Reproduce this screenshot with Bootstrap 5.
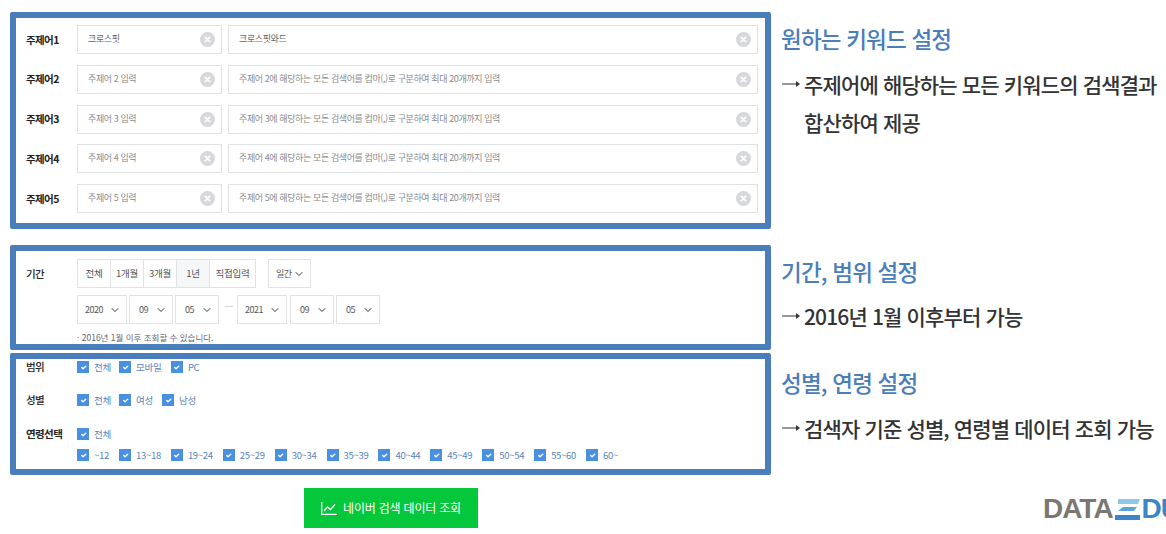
<!DOCTYPE html>
<html lang="ko">
<head>
<meta charset="UTF-8">
<title>네이버 검색 데이터 조회</title>
<link href="https://cdn.jsdelivr.net/npm/bootstrap@5.3.3/dist/css/bootstrap.min.css" rel="stylesheet">
<style>
html, body { height: 534px; overflow: hidden; background: #fff; }
body { font-family: "Noto Sans CJK KR", "Noto Sans", sans-serif; color: #333; }
.page-wrap { width: 1166px; height: 534px; overflow: hidden; padding: 12px 0 0 10px; }
.left-col { width: 761px; flex: none; }
.blue-box { border: 6px solid #4a7ebb; border-radius: 2px; background: #fff; overflow: hidden; padding-left: 10px; }
.box-keyword { height: 217px; padding-top: 7px; padding-right: 7px; }
.box-period { height: 105px; margin-top: 16px; padding-top: 8px; }
.box-range { height: 122px; margin-top: 3px; }
.kw-row { height: 29px; margin-bottom: 10.8px; }
.row-label { width: 51px; flex: none; font-size: 10.5px; font-weight: 700; color: #222; letter-spacing: -.6px; }
.label-plain { font-weight: 500; }
.field { position: relative; }
.field-short { width: 145px; flex: none; margin-right: 6px; }
.field .form-control { height: 29px; border: 1px solid #dfe1e5; border-radius: 0; font-size: 9px; letter-spacing: -.4px; padding: 0 28px 2px 10px; color: #666; box-shadow: none; }
.field .form-control::placeholder { color: #8a8a8a; }
.clear-btn { position: absolute; right: 7px; top: 7px; width: 15px; height: 15px; }
.seg-btn { height: 29px; border: 1px solid #e0e2e6; margin-left: -1px; background: #fff; font-size: 9.5px; letter-spacing: -.3px; color: #555; display: flex; align-items: center; justify-content: center; padding: 0; border-radius: 0 !important; }
.seg-btn:first-child { margin-left: 0; }
.seg-on { background: #f6f7f9; }
.w-33 { width: 34px; }
.w-46 { width: 47px; }
.date-row { margin-top: 7px; }
.date-row .form-select, .unit-select { height: 29px; border: 1px solid #e0e2e6; border-radius: 0; font-size: 9px; letter-spacing: -.5px; color: #555; padding: 0 0 0 7px; background-size: 8px; background-position: right 7px center; box-shadow: none; }
.sel-y { width: 50px; margin-right: 2px; }
.date-row .sel-d { width: 44px; margin-right: 2px; padding-left: 9px; }
.sel-gap { margin-right: 3px; }
.unit-select { width: 43px; margin-left: 12px; }
.date-dash { width: 16px; text-align: center; color: #ccc; font-size: 10px; line-height: 20px; }
.date-note { font-size: 8.5px; color: #666; margin: 5px 0 0 0; line-height: 16px; white-space: nowrap; }
.check-row { height: 16px; }
.check-item { display: flex; align-items: center; margin: 0; padding: 0; min-height: 0; font-size: 9.5px; letter-spacing: -.3px; color: #5b84b8; }
.check-item .form-check-input { width: 12px; height: 12px; margin: 0 5px 0 0; float: none; border: 0; border-radius: 0; background-color: #4a90e2; background-size: 9px; }
.range-2 { margin-top: 17px; }
.range-3 { margin-top: 18px; }
.range-4 { margin-top: 5px; }
.age-item { width: 51.9px; flex: none; }
.first-item { width: 42px; flex: none; }
.second-gender { width: 43px; flex: none; }
.search-btn { width: 174px; height: 40px; margin: 13px 0 0 294px; background: #05c73c; border: 0; border-radius: 0; color: #fff; font-size: 12px; letter-spacing: -.2px; display: flex; align-items: center; justify-content: center; gap: 6px; }
.right-col { width: 395px; flex: none; padding-left: 10px; }
.side-title { color: #4a7ebb; font-size: 22.5px; font-weight: 500; letter-spacing: -.8px; line-height: 30px; margin: 0; }
.side-text { color: #333; font-size: 21px; font-weight: 500; letter-spacing: -.85px; line-height: 38px; padding-left: 23px; position: relative; margin: 0; white-space: nowrap; }
.side-arrow { position: absolute; left: 1px; top: 15px; width: 18px; height: 8px; }
.title-1 { margin-top: 11px; }
.text-1 { margin-top: 12px; }
.title-2 { margin-top: 115px; }
.text-2 { margin-top: 11px; }
.title-3 { margin-top: 32px; }
.text-3 { margin-top: 12px; }
.logo-box { position: absolute; left: 1043px; top: 493px; display: flex; align-items: center; gap: 2px; font-family: "Liberation Sans", sans-serif; font-size: 28px; font-weight: 700; line-height: 32px; letter-spacing: -1px; white-space: nowrap; }
.logo-data { color: #7b7773; }
.logo-du { color: #3a86c8; }
</style>
</head>
<body>
<div class="page-wrap d-flex">
  <div class="left-col">
    <div class="blue-box box-keyword">
      <div class="kw-row d-flex align-items-center">
        <div class="row-label">주제어1</div>
        <div class="field field-short"><input class="form-control" value="크로스핏"><svg class="clear-btn" viewBox="0 0 15 15"><circle cx="7.5" cy="7.5" r="7.5" fill="#d6d8db"/><path d="M4.8 4.8l5.4 5.4M10.2 4.8l-5.4 5.4" stroke="#fff" stroke-width="1.6"/></svg></div>
        <div class="field flex-grow-1"><input class="form-control" value="크로스핏와드"><svg class="clear-btn" viewBox="0 0 15 15"><circle cx="7.5" cy="7.5" r="7.5" fill="#d6d8db"/><path d="M4.8 4.8l5.4 5.4M10.2 4.8l-5.4 5.4" stroke="#fff" stroke-width="1.6"/></svg></div>
      </div>
      <div class="kw-row d-flex align-items-center">
        <div class="row-label">주제어2</div>
        <div class="field field-short"><input class="form-control" placeholder="주제어 2 입력"><svg class="clear-btn" viewBox="0 0 15 15"><circle cx="7.5" cy="7.5" r="7.5" fill="#d6d8db"/><path d="M4.8 4.8l5.4 5.4M10.2 4.8l-5.4 5.4" stroke="#fff" stroke-width="1.6"/></svg></div>
        <div class="field flex-grow-1"><input class="form-control" placeholder="주제어 2에 해당하는 모든 검색어를 컴마(,)로 구분하여 최대 20개까지 입력"><svg class="clear-btn" viewBox="0 0 15 15"><circle cx="7.5" cy="7.5" r="7.5" fill="#d6d8db"/><path d="M4.8 4.8l5.4 5.4M10.2 4.8l-5.4 5.4" stroke="#fff" stroke-width="1.6"/></svg></div>
      </div>
      <div class="kw-row d-flex align-items-center">
        <div class="row-label">주제어3</div>
        <div class="field field-short"><input class="form-control" placeholder="주제어 3 입력"><svg class="clear-btn" viewBox="0 0 15 15"><circle cx="7.5" cy="7.5" r="7.5" fill="#d6d8db"/><path d="M4.8 4.8l5.4 5.4M10.2 4.8l-5.4 5.4" stroke="#fff" stroke-width="1.6"/></svg></div>
        <div class="field flex-grow-1"><input class="form-control" placeholder="주제어 3에 해당하는 모든 검색어를 컴마(,)로 구분하여 최대 20개까지 입력"><svg class="clear-btn" viewBox="0 0 15 15"><circle cx="7.5" cy="7.5" r="7.5" fill="#d6d8db"/><path d="M4.8 4.8l5.4 5.4M10.2 4.8l-5.4 5.4" stroke="#fff" stroke-width="1.6"/></svg></div>
      </div>
      <div class="kw-row d-flex align-items-center">
        <div class="row-label">주제어4</div>
        <div class="field field-short"><input class="form-control" placeholder="주제어 4 입력"><svg class="clear-btn" viewBox="0 0 15 15"><circle cx="7.5" cy="7.5" r="7.5" fill="#d6d8db"/><path d="M4.8 4.8l5.4 5.4M10.2 4.8l-5.4 5.4" stroke="#fff" stroke-width="1.6"/></svg></div>
        <div class="field flex-grow-1"><input class="form-control" placeholder="주제어 4에 해당하는 모든 검색어를 컴마(,)로 구분하여 최대 20개까지 입력"><svg class="clear-btn" viewBox="0 0 15 15"><circle cx="7.5" cy="7.5" r="7.5" fill="#d6d8db"/><path d="M4.8 4.8l5.4 5.4M10.2 4.8l-5.4 5.4" stroke="#fff" stroke-width="1.6"/></svg></div>
      </div>
      <div class="kw-row d-flex align-items-center">
        <div class="row-label">주제어5</div>
        <div class="field field-short"><input class="form-control" placeholder="주제어 5 입력"><svg class="clear-btn" viewBox="0 0 15 15"><circle cx="7.5" cy="7.5" r="7.5" fill="#d6d8db"/><path d="M4.8 4.8l5.4 5.4M10.2 4.8l-5.4 5.4" stroke="#fff" stroke-width="1.6"/></svg></div>
        <div class="field flex-grow-1"><input class="form-control" placeholder="주제어 5에 해당하는 모든 검색어를 컴마(,)로 구분하여 최대 20개까지 입력"><svg class="clear-btn" viewBox="0 0 15 15"><circle cx="7.5" cy="7.5" r="7.5" fill="#d6d8db"/><path d="M4.8 4.8l5.4 5.4M10.2 4.8l-5.4 5.4" stroke="#fff" stroke-width="1.6"/></svg></div>
      </div>
    </div>

    <div class="blue-box box-period">
      <div class="d-flex align-items-center">
        <div class="row-label label-plain">기간</div>
        <div class="d-flex">
          <button type="button" class="seg-btn w-33">전체</button>
          <button type="button" class="seg-btn w-33">1개월</button>
          <button type="button" class="seg-btn w-33">3개월</button>
          <button type="button" class="seg-btn w-33 seg-on">1년</button>
          <button type="button" class="seg-btn w-46">직접입력</button>
        </div>
        <select class="form-select unit-select"><option>일간</option></select>
      </div>
      <div class="d-flex date-row">
        <div class="row-label"></div>
        <select class="form-select sel-y"><option>2020</option></select>
        <select class="form-select sel-d"><option>09</option></select>
        <select class="form-select sel-d"><option>05</option></select>
        <div class="date-dash">—</div>
        <select class="form-select sel-y sel-gap"><option>2021</option></select>
        <select class="form-select sel-d"><option>09</option></select>
        <select class="form-select sel-d"><option>05</option></select>
      </div>
      <div class="d-flex">
        <div class="row-label"></div>
        <p class="date-note">· 2016년 1월 이후 조회할 수 있습니다.</p>
      </div>
    </div>

    <div class="blue-box box-range">
      <div class="d-flex align-items-center check-row">
        <div class="row-label label-plain">범위</div>
        <label class="check-item first-item"><input class="form-check-input" type="checkbox" checked>전체</label>
        <label class="check-item age-item"><input class="form-check-input" type="checkbox" checked>모바일</label>
        <label class="check-item age-item"><input class="form-check-input" type="checkbox" checked>PC</label>
      </div>
      <div class="d-flex align-items-center check-row range-2">
        <div class="row-label label-plain">성별</div>
        <label class="check-item first-item"><input class="form-check-input" type="checkbox" checked>전체</label>
        <label class="check-item second-gender"><input class="form-check-input" type="checkbox" checked>여성</label>
        <label class="check-item"><input class="form-check-input" type="checkbox" checked>남성</label>
      </div>
      <div class="d-flex align-items-center check-row range-3">
        <div class="row-label">연령선택</div>
        <label class="check-item"><input class="form-check-input" type="checkbox" checked>전체</label>
      </div>
      <div class="d-flex align-items-center check-row range-4">
        <div class="row-label"></div>
        <label class="check-item first-item"><input class="form-check-input" type="checkbox" checked>~12</label>
        <label class="check-item age-item"><input class="form-check-input" type="checkbox" checked>13~18</label>
        <label class="check-item age-item"><input class="form-check-input" type="checkbox" checked>19~24</label>
        <label class="check-item age-item"><input class="form-check-input" type="checkbox" checked>25~29</label>
        <label class="check-item age-item"><input class="form-check-input" type="checkbox" checked>30~34</label>
        <label class="check-item age-item"><input class="form-check-input" type="checkbox" checked>35~39</label>
        <label class="check-item age-item"><input class="form-check-input" type="checkbox" checked>40~44</label>
        <label class="check-item age-item"><input class="form-check-input" type="checkbox" checked>45~49</label>
        <label class="check-item age-item"><input class="form-check-input" type="checkbox" checked>50~54</label>
        <label class="check-item age-item"><input class="form-check-input" type="checkbox" checked>55~60</label>
        <label class="check-item age-item"><input class="form-check-input" type="checkbox" checked>60~</label>
      </div>
    </div>

    <button type="button" class="btn search-btn">
      <svg width="16" height="13" viewBox="0 0 16 13" fill="none" stroke="#fff" stroke-width="1.3"><path d="M.7 0v12.3H16"/><path d="M3 9l3.5-4 3 2.6L14 2.5"/></svg>
      네이버 검색 데이터 조회
    </button>
  </div>

  <div class="right-col">
    <h2 class="side-title title-1">원하는 키워드 설정</h2>
    <p class="side-text text-1"><svg class="side-arrow" viewBox="0 0 18 8" fill="#333"><path d="M0 3.4h14V1l4 3-4 3V4.6H0z"/></svg>주제어에 해당하는 모든 키워드의 검색결과<br>합산하여 제공</p>
    <h2 class="side-title title-2">기간, 범위 설정</h2>
    <p class="side-text text-2"><svg class="side-arrow" viewBox="0 0 18 8" fill="#333"><path d="M0 3.4h14V1l4 3-4 3V4.6H0z"/></svg>2016년 1월 이후부터 가능</p>
    <h2 class="side-title title-3">성별, 연령 설정</h2>
    <p class="side-text text-3"><svg class="side-arrow" viewBox="0 0 18 8" fill="#333"><path d="M0 3.4h14V1l4 3-4 3V4.6H0z"/></svg>검색자 기준 성별, 연령별 데이터 조회 가능</p>
  </div>
</div>

<div class="logo-box">
  <span class="logo-data">DATA</span>
  <svg width="25" height="21" viewBox="0 0 25 21"><path d="M3 0h22l-2 5H3z" fill="#8cc8ea"/><path d="M8 8h14l-3 4H3z" fill="#5aa5dc"/><path d="M0 16h25v5H0z" fill="#3a86c8"/></svg>
  <span class="logo-du">DU</span>
</div>
<script src="https://cdn.jsdelivr.net/npm/bootstrap@5.3.3/dist/js/bootstrap.bundle.min.js"></script>
</body>
</html>
